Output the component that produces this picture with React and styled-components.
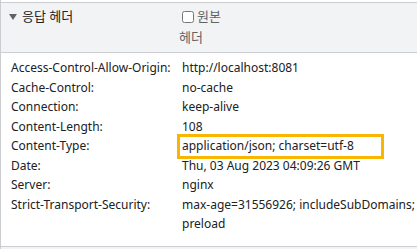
import React from 'react';
import styled, {createGlobalStyle} from 'styled-components';

const headers = [
    ['Access-Control-Allow-Origin:', 'http://localhost:8081'],
    ['Cache-Control:', 'no-cache'],
    ['Connection:', 'keep-alive'],
    ['Content-Length:', '108'],
    ['Content-Type:', 'application/json; charset=utf-8', true],
    ['Date:', 'Thu, 03 Aug 2023 04:09:26 GMT'],
    ['Server:', 'nginx'],
    ['Strict-Transport-Security:', 'max-age=31556926; includeSubDomains; preload'],
];

const App = () => {
    return (
        <Panel>
            <GlobalStyle/>
            <SectionHeader>
                <Title>
                    <Caret/>
                    응답 헤더
                </Title>
                <RawToggle>
                    <input type="checkbox"/>
                    원본 헤더
                </RawToggle>
            </SectionHeader>
            <Rows>
                {headers.map(([name, value, marked]) =>
                    <Row key={name}>
                        <Name>{name}</Name>
                        <Value>
                            {value}
                            {marked && <Highlight/>}
                        </Value>
                    </Row>
                )}
            </Rows>
            <NextSection/>
        </Panel>
    )
}

const GlobalStyle = createGlobalStyle`
  body {
    margin: 0;
    background: #fff;
    font-family: "Noto Sans", "Noto Sans CJK KR", sans-serif;
    font-size: 12px;
    color: #202124;
  }
`;

const Panel = styled.div`
  width: 417px;
  height: 249px;
  box-sizing: border-box;
  padding-top: 2px;
  border-left: 1px solid #cbcdd1;
  overflow: hidden;
`;

const SectionHeader = styled.div`
  display: flex;
  align-items: flex-start;
  height: 49px;
  background: #f1f3f4;
  border-top: 1px solid #cbcdd1;
  border-bottom: 1px solid #cbcdd1;
`;

const Title = styled.div`
  display: flex;
  align-items: center;
  width: 170px;
  padding: 3px 0 0 8px;
  font-size: 13px;
  line-height: 21px;
  color: #202124;
`;

const Caret = styled.span`
  width: 0;
  height: 0;
  margin-right: 5px;
  border-left: 4px solid transparent;
  border-right: 4px solid transparent;
  border-top: 6px solid #5f6368;
`;

const RawToggle = styled.label`
  width: 46px;
  padding-top: 3px;
  font-size: 13px;
  line-height: 21px;
  color: #5f6368;

  input {
    width: 12px;
    height: 12px;
    margin: 0 3px 0 3px;
    vertical-align: -2px;
  }
`;

const Rows = styled.div`
  padding: 5px 0 0 10px;
  height: 194px;
  border-bottom: 1px solid #cbcdd1;
  box-sizing: border-box;
`;

const Row = styled.div`
  display: grid;
  grid-template-columns: 171px 234px;
  line-height: 19.5px;
`;

const Name = styled.div`
  white-space: nowrap;
`;

const Value = styled.div`
  position: relative;
`;

const Highlight = styled.div`
  position: absolute;
  left: -5px;
  top: -2px;
  width: 201px;
  height: 19px;
  border: 3px solid #f8b600;
`;

const NextSection = styled.div`
  height: 10px;
  background: #f1f3f4;
`;

export default App;
